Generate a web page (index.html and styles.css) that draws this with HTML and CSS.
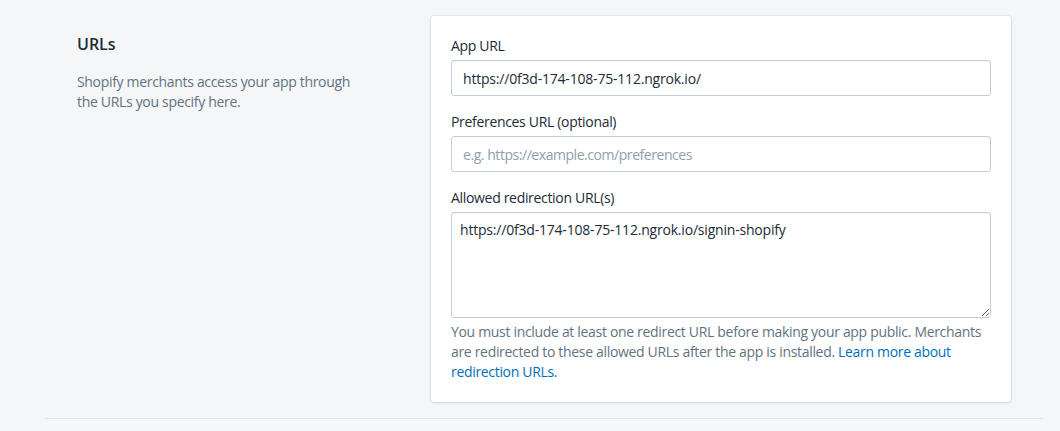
FILE: index.html
```html
<!DOCTYPE html>
<html lang="en">
<head>
<meta charset="utf-8">
<title>URLs</title>
<link rel="stylesheet" href="styles.css">
</head>
<body>
<div class="page">
  <section class="section">
    <div class="annotation">
      <h2 class="heading">URLs</h2>
      <p class="description">Shopify merchants access your app through the URLs you specify here.</p>
    </div>
    <div class="card">
      <div class="field">
        <label class="label" for="app-url">App URL</label>
        <input class="input" id="app-url" type="text" value="https://0f3d-174-108-75-112.ngrok.io/">
      </div>
      <div class="field">
        <label class="label" for="pref-url">Preferences URL (optional)</label>
        <input class="input" id="pref-url" type="text" placeholder="e.g. https://example.com/preferences">
      </div>
      <div class="field">
        <label class="label" for="redir">Allowed redirection URL(s)</label>
        <textarea class="textarea" id="redir">https://0f3d-174-108-75-112.ngrok.io/signin-shopify</textarea>
        <p class="help">You must include at least one redirect URL before making your app public. Merchants are redirected to these allowed URLs after the app is installed. <a class="link" href="#">Learn more about redirection URLs.</a></p>
      </div>
    </div>
  </section>
  <hr class="divider">
</div>
</body>
</html>
```

FILE: styles.css
```css
html, body {
  margin: 0;
  padding: 0;
  background: #f4f6f8;
}

body {
  font-family: "Open Sans", "Noto Sans", sans-serif;
  font-size: 14px;
  line-height: 20px;
  letter-spacing: -0.32px;
  color: #212b36;
}

.page {
  margin: 0 17px 0 45px;
  padding-top: 16px;
}

.section {
  display: flex;
  padding: 0 32px;
  gap: 32px;
}

.annotation {
  width: 322px;
  flex: none;
  padding-top: 16px;
  box-sizing: border-box;
  padding-right: 40px;
}

.heading {
  margin: 0;
  font-size: 16px;
  line-height: 24px;
  font-weight: 600;
  letter-spacing: 0;
  color: #212b36;
}

.description {
  margin: 16px 0 0;
  color: #637381;
}

.card {
  width: 580px;
  flex: none;
  box-sizing: border-box;
  background: #fff;
  border-radius: 3px;
  box-shadow: 0 0 0 1px rgba(63, 63, 68, 0.05), 0 1px 3px 0 rgba(63, 63, 68, 0.15);
  padding: 20px;
}

.field + .field {
  margin-top: 16px;
}

.label {
  display: block;
  margin-bottom: 4px;
  color: #212b36;
}

.input,
.textarea {
  display: block;
  width: 100%;
  box-sizing: border-box;
  border: 1px solid #c4cdd5;
  border-radius: 3px;
  box-shadow: inset 0 1px 0 0 rgba(99, 115, 129, 0.05);
  font: inherit;
  letter-spacing: -0.2px;
  color: #212b36;
  background: #fff;
  margin: 0;
}

.input {
  height: 36px;
  padding: 0 11px;
}

.input::placeholder {
  color: #919eab;
  letter-spacing: -0.45px;
}

.textarea {
  height: 106px;
  padding: 7px 8px;
  resize: vertical;
}

.help {
  margin: 4px 0 0;
  color: #637381;
}

.link {
  color: #006fbb;
  text-decoration: none;
}

.divider {
  margin: 16px 0 0;
  border: 0;
  border-top: 1px solid #dfe3e8;
  width: 998px;
}
```
